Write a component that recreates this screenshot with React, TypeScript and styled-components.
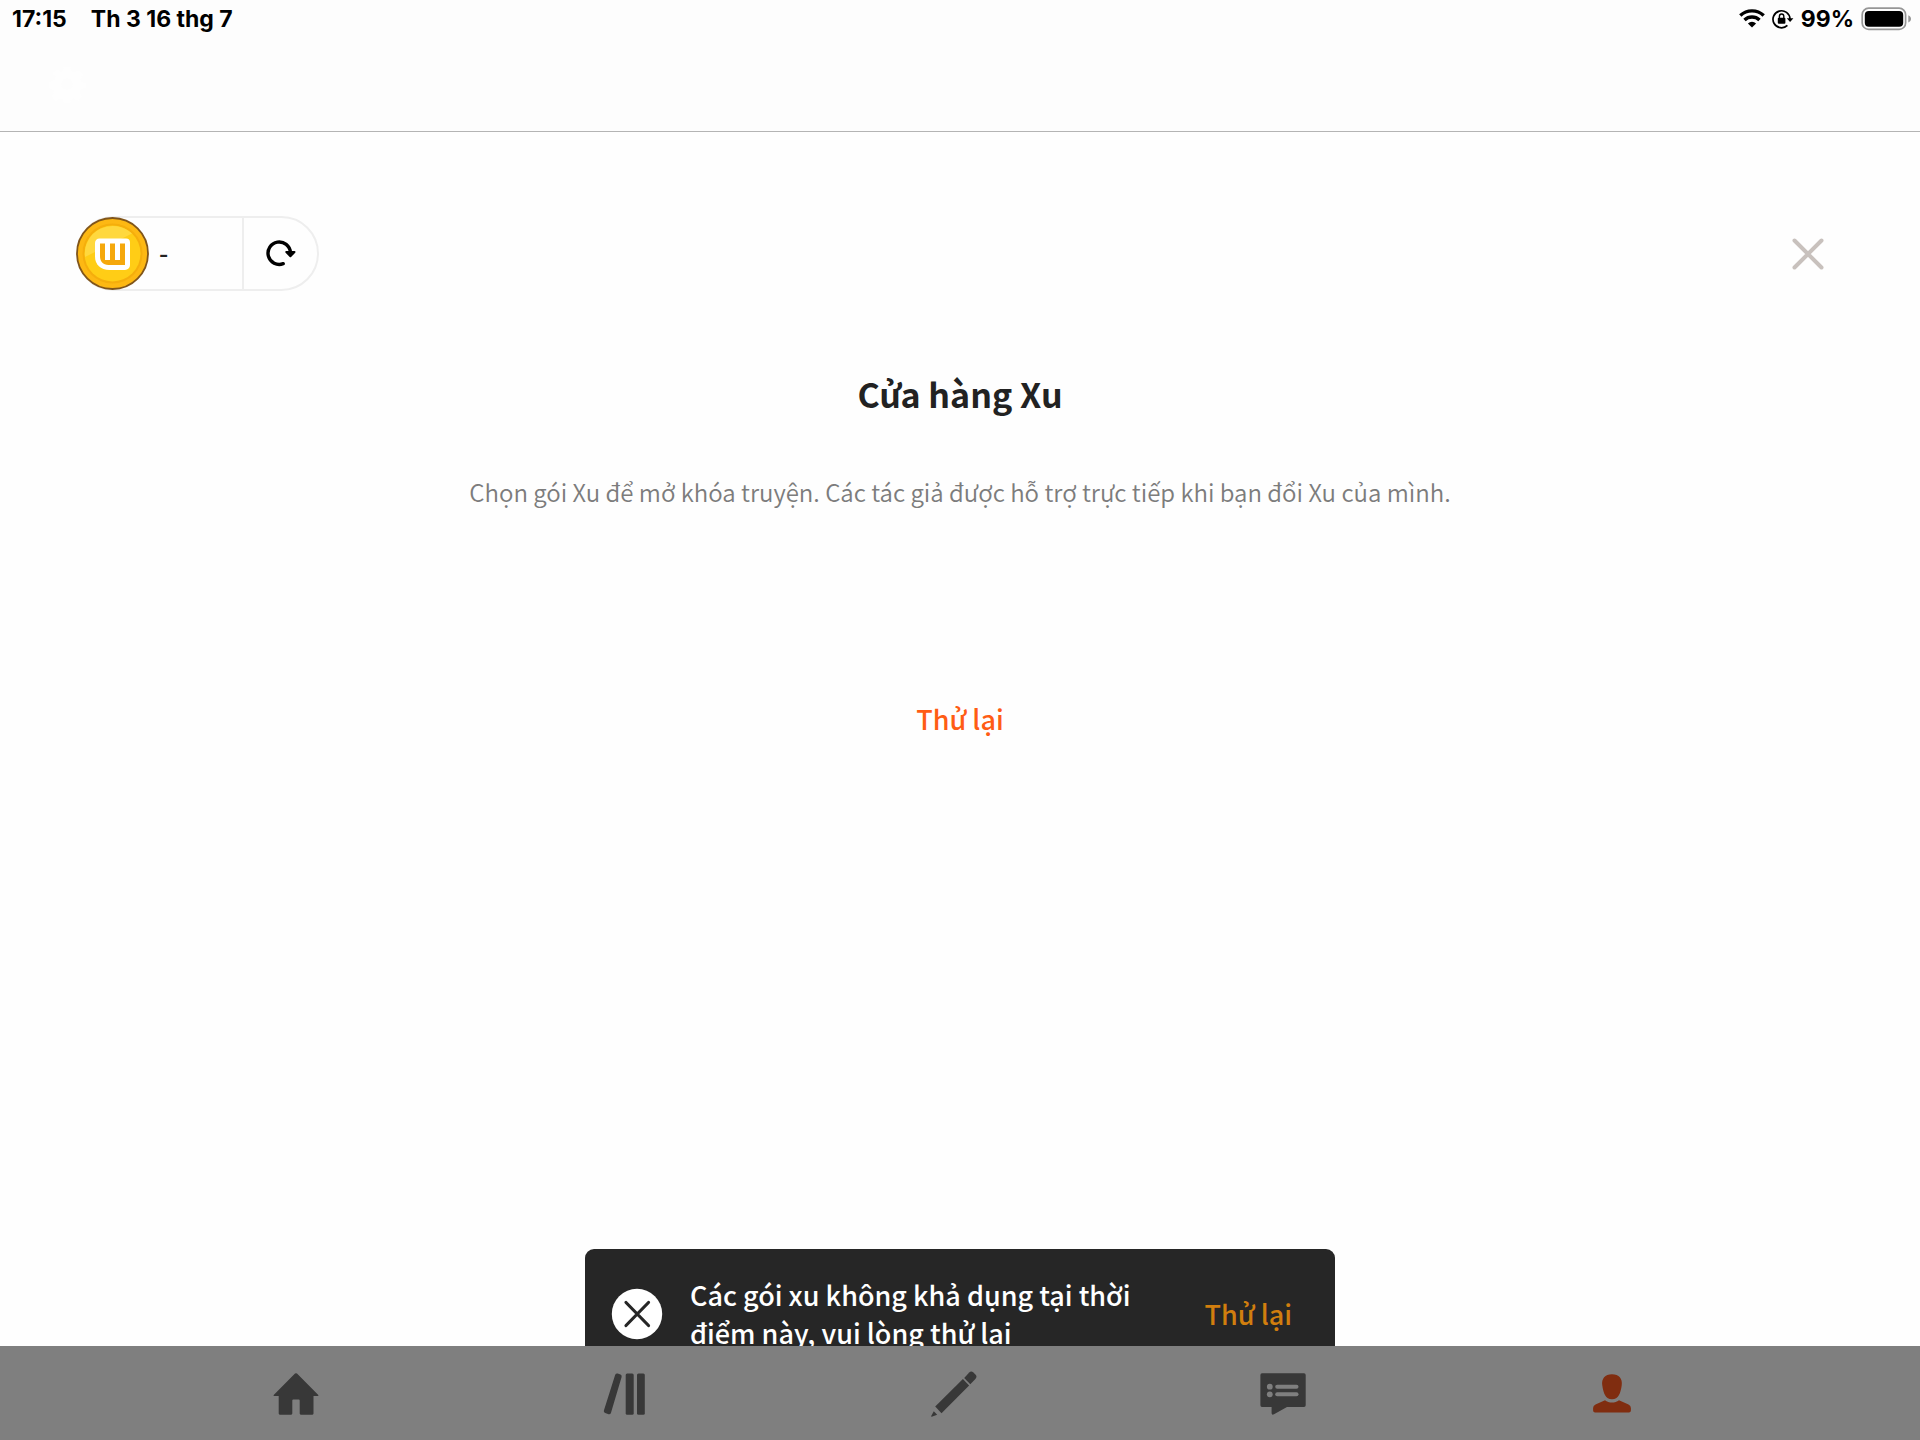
import React from "react";
import styled, { createGlobalStyle } from "styled-components";

const GlobalStyle = createGlobalStyle`
  * { box-sizing: border-box; }
  body {
    margin: 0;
    background: #fefefe;
    color: #222222;
    font-family: "Noto Sans CJK JP", "Noto Sans", sans-serif;
  }
  button { font: inherit; }
`;

const Page = styled.div`
  display: flex;
  flex-direction: column;
  min-height: 100vh;
`;

const StatusBar = styled.div`
  display: flex;
  align-items: center;
  justify-content: space-between;
  height: 37px;
  padding: 0 8px 0 12px;
  color: #000000;
  font-family: Inter, sans-serif;
  font-size: 23px;
  font-weight: 700;
  line-height: 28px;
`;

const StatusGroup = styled.div`
  display: flex;
  align-items: center;
  gap: 7px;
`;

const Clock = styled(StatusGroup)`
  gap: 24px;
`;

const Header = styled.header`
  border-bottom: 1px solid #b4b4b4;
  background: #fdfdfd;
`;

const Toolbar = styled.div`
  display: flex;
  align-items: center;
  height: 94px;
  padding: 0 48px;
`;

const PlainButton = styled.button`
  display: flex;
  align-items: center;
  justify-content: center;
  padding: 0;
  border: 0;
  background: none;
  cursor: pointer;
`;

const Main = styled.main`
  display: flex;
  flex: 1;
  flex-direction: column;
  padding-top: 84px;
`;

const WalletRow = styled.div`
  display: flex;
  align-items: center;
  justify-content: space-between;
  padding: 0 96px 0 76px;
`;

const Wallet = styled.div`
  display: flex;
  width: 243px;
  height: 75px;
  border: 2px solid #eeeeee;
  border-radius: 38px;
`;

const Balance = styled.div`
  display: flex;
  flex: 1;
  align-items: center;
  gap: 10px;
  margin-left: -2px;
  font-size: 26px;
  font-weight: 500;
  line-height: 40px;
`;

const Amount = styled.span`
  padding-bottom: 4px;
`;

const RefreshButton = styled(PlainButton)`
  width: 75px;
  padding-bottom: 2px;
  border-left: 2px solid #eeeeee;
`;

const Intro = styled.section`
  display: flex;
  flex-direction: column;
  align-items: center;
  padding-top: 78px;
  text-align: center;
`;

const Title = styled.h1`
  margin: 0;
  font-size: 34px;
  font-weight: 700;
  line-height: 50px;
`;

const Subtitle = styled.p`
  margin: 53px 0 0;
  color: #7c7c7c;
  font-size: 24px;
  font-weight: 350;
  line-height: 40px;
`;

const RetryButton = styled(PlainButton)`
  margin-top: 187px;
  color: #ff5c14;
  font-size: 27px;
  font-weight: 500;
  line-height: 40px;
`;

const Toast = styled.div`
  position: fixed;
  bottom: 61px;
  left: 50%;
  display: flex;
  align-items: center;
  width: 750px;
  height: 130px;
  padding: 0 43px 0 26px;
  border-radius: 9px;
  background: #262626;
  color: #ffffff;
  font-size: 27px;
  font-weight: 500;
  line-height: 38px;
  transform: translateX(-50%);
`;

const ToastText = styled.p`
  flex: 1;
  margin: 0 60px 0 27px;
`;

const ToastAction = styled(PlainButton)`
  color: #d17e0e;
`;

const TabBar = styled.nav`
  position: sticky;
  bottom: 0;
  z-index: 2;
  display: flex;
  height: 94px;
  padding: 2px 143px 0 131px;
  background: #7f7f7f;
`;

const Tab = styled(PlainButton)<{ $active?: boolean }>`
  flex: 1;
  color: ${(p) => (p.$active ? "#802d10" : "#383838")};
`;

const WifiIcon = () => (
  <svg width="26" height="19" viewBox="0 0 26 19" fill="none" stroke="#000" strokeWidth="3.4">
    <path d="M1.3 6.5a17 17 0 0 1 23.4 0" />
    <path d="M5.5 11a11 11 0 0 1 15 0" />
    <path d="M13 18.6 8.9 14.4a6 6 0 0 1 8.2 0Z" fill="#000" stroke="none" />
  </svg>
);

const RotationLockIcon = () => (
  <svg width="22" height="20" viewBox="0 0 22 20" fill="none" stroke="#000">
    <path d="M15.4 16.4A8.5 8.5 0 1 1 18 10" strokeWidth="1.7" />
    <path d="M14.8 9.2h6.6L18.1 13Z" fill="#000" stroke="none" />
    <rect x="5.8" y="8.8" width="7.6" height="6" rx="1" fill="#000" stroke="none" />
    <path d="M7.4 9.2V7.2a2.2 2.2 0 0 1 4.4 0v2" strokeWidth="1.4" />
  </svg>
);

const BatteryIcon = () => (
  <svg width="51" height="24" viewBox="0 0 51 24">
    <rect x="1.2" y="1.2" width="43.4" height="21.2" rx="6.5" fill="none" stroke="#969696" strokeWidth="1.7" />
    <rect x="3.8" y="4" width="38.4" height="15.8" rx="4" fill="#000" />
    <path d="M47.3 8.2c3.6 1.5 3.6 5.8 0 7.3Z" fill="#969696" />
  </svg>
);

const GearIcon = () => (
  <svg width="38" height="38" viewBox="0 0 24 24" fill="#fefefe" fillRule="evenodd">
    <path d="M10 1h4l.7 3 2 .9 2.7-1.6 2.8 2.8-1.6 2.7.8 2 2.6.7v3l-3 .7-.8 2 1.6 2.7-2.7 2.8-2.7-1.6-2 .8-.7 3h-3.4l-.8-3-2-.8-2.7 1.6-2.8-2.8 1.6-2.7-.8-2L.8 14.5v-4l3-.7.8-2L3 5.2l2.8-2.4 2.7 1.6.9-.3ZM12 8.5a3.5 3.5 0 1 0 0 7 3.5 3.5 0 0 0 0-7Z" />
  </svg>
);

const CoinIcon = () => (
  <svg width="73" height="73" viewBox="0 0 73 73">
    <circle cx="36.5" cy="36.5" r="35.5" fill="#fdb813" stroke="#80551a" strokeWidth="1.8" />
    <circle cx="36.5" cy="36.5" r="30" fill="#f5ae0c" />
    <circle cx="36.5" cy="36.5" r="28" fill="#ffcd16" />
    <path d="M9 40A28 28 0 0 1 56 16.5Z" fill="#ffd83e" />
    <path d="M23.5 21.5H50a4 4 0 0 1 4 4V48a5 5 0 0 1-5 5H33.5C24.5 53 19 47.5 19 39.5V26a4.5 4.5 0 0 1 4.5-4.5Z" fill="#fff" />
    <path d="M24 26.5h5V43h5V26.5h5V43h5V26.5h5V48H32.5C27 48 24 44.5 24 39Z" fill="#f5a80c" />
  </svg>
);

const RefreshIcon = () => (
  <svg width="30" height="28" viewBox="0 0 30 28" fill="none" stroke="#000">
    <path d="M17.2 24.7A11.2 11.2 0 1 1 24.4 13.5" strokeWidth="3.4" strokeLinecap="round" />
    <path d="M20.3 13h8.2l-4.1 4.3Z" fill="#000" strokeWidth="2" strokeLinejoin="round" />
  </svg>
);

const CloseIcon = () => (
  <svg width="32" height="32" viewBox="0 0 32 32" stroke="#c8c1bd" strokeWidth="4" strokeLinecap="round">
    <path d="m2.5 2.5 27 27M29.5 2.5l-27 27" />
  </svg>
);

const AlertIcon = () => (
  <svg width="52" height="52" viewBox="0 0 52 52">
    <circle cx="26" cy="26" r="25.2" fill="#fff" />
    <path d="m15 14.5 22.5 23M37.5 14.5 15 37.5" stroke="#262626" strokeWidth="3.2" strokeLinecap="round" />
  </svg>
);

const HomeIcon = () => (
  <svg width="46" height="42" viewBox="0 0 46 42" fill="currentColor">
    <path d="M22 .6a1.5 1.5 0 0 1 2 0l21.3 21.3q.6 1-.6 1.1H40.5v17.6q0 1.1-1.1 1.1H27.8q-1.1 0-1.1-1.1V27.5q0-1-1-1h-5.4q-1 0-1 1v13.1q0 1.1-1.1 1.1H6.8q-1.1 0-1.1-1.1V23H1.3Q.1 22.9.7 21.9Z" />
  </svg>
);

const LibraryIcon = () => (
  <svg width="44" height="42" viewBox="0 0 44 42" fill="currentColor">
    <path d="M12.2 1.8Q13 .2 14.7.6l2.8 1q1.6.6 1.1 2.4L8 39.7q-.6 1.9-2.4 1.5l-3.4-1.1Q.3 39.4.9 37.6Z" />
    <rect x="22.7" y=".4" width="8" height="41.4" rx="1.5" />
    <rect x="34" y=".4" width="7.8" height="41.4" rx="1.5" />
  </svg>
);

const PencilIcon = () => (
  <svg width="46" height="46" viewBox="0 0 46 46" fill="currentColor">
    <path d="m33.2 7 5-5.4q2-2.1 4.2 0l2 2q2.1 2.2 0 4.4l-5.1 5.2Z" />
    <path d="m31.9 8.1 6.2 6.3-27.6 27.8-6.3-6.7Z" />
    <path d="m2.8 40.2 3.4 3.6-5.5 2q-.7 0-.5-.8Z" />
  </svg>
);

const MessageIcon = () => (
  <svg width="46" height="42" viewBox="0 0 46 42">
    <path d="M2 .3h42q1.7 0 1.7 1.7v30.3q0 1.7-1.7 1.7H27L14 41.3q-2.2 1.1-2.4-1V34H2Q.4 34 .4 32.3V2Q.4.3 2 .3Z" fill="currentColor" />
    <g fill="#7f7f7f">
      <circle cx="9.8" cy="13.7" r="2.9" />
      <circle cx="9.8" cy="21.3" r="2.9" />
      <rect x="15.2" y="11.7" width="23.3" height="4" rx="2" />
      <rect x="15.2" y="19.3" width="23.3" height="4" rx="2" />
    </g>
  </svg>
);

const PersonIcon = () => (
  <svg width="38" height="40" viewBox="0 0 38 40" fill="currentColor">
    <path d="M19 .2c7 0 10.7 4.5 9.7 11.2C27.6 19 25.5 25.2 19 25.2S10.400 19 9.3 11.4C8.3 4.7 12 .2 19 .2Z" />
    <path d="M12 26.2c4 3.2 10 3.2 14 0l9.5 4.3q2.4 1 2.4 3.5v2.5q0 2-2 2H2.1q-2 0-2-2V34q0-2.5 2.4-3.5Z" />
  </svg>
);

export default function App() {
  return (
    <Page>
      <GlobalStyle />
      <Header>
        <StatusBar>
          <Clock>
            <span>17:15</span>
            <span>Th 3 16 thg 7</span>
          </Clock>
          <StatusGroup>
            <WifiIcon />
            <RotationLockIcon />
            <span>99%</span>
            <BatteryIcon />
          </StatusGroup>
        </StatusBar>
        <Toolbar>
          <PlainButton aria-label="Cài đặt">
            <GearIcon />
          </PlainButton>
        </Toolbar>
      </Header>
      <Main>
        <WalletRow>
          <Wallet>
            <Balance>
              <CoinIcon />
              <Amount>-</Amount>
            </Balance>
            <RefreshButton aria-label="Làm mới">
              <RefreshIcon />
            </RefreshButton>
          </Wallet>
          <PlainButton aria-label="Đóng">
            <CloseIcon />
          </PlainButton>
        </WalletRow>
        <Intro>
          <Title>Cửa hàng Xu</Title>
          <Subtitle>
            Chọn gói Xu để mở khóa truyện. Các tác giả được hỗ trợ trực tiếp khi bạn đổi Xu của mình.
          </Subtitle>
          <RetryButton>Thử lại</RetryButton>
        </Intro>
      </Main>
      <Toast role="alert">
        <AlertIcon />
        <ToastText>Các gói xu không khả dụng tại thời điểm này, vui lòng thử lại</ToastText>
        <ToastAction>Thử lại</ToastAction>
      </Toast>
      <TabBar>
        <Tab aria-label="Trang chủ">
          <HomeIcon />
        </Tab>
        <Tab aria-label="Thư viện">
          <LibraryIcon />
        </Tab>
        <Tab aria-label="Viết">
          <PencilIcon />
        </Tab>
        <Tab aria-label="Tin nhắn">
          <MessageIcon />
        </Tab>
        <Tab aria-label="Hồ sơ" $active>
          <PersonIcon />
        </Tab>
      </TabBar>
    </Page>
  );
}
